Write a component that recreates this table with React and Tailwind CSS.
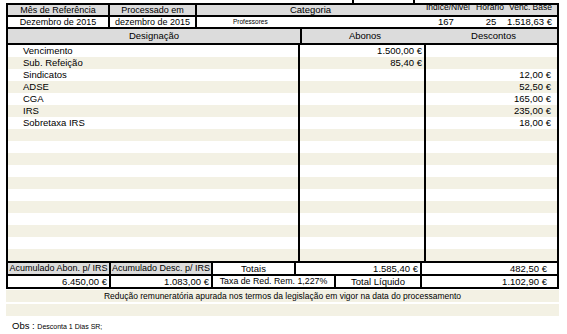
const body = [
  ['Vencimento', '1.500,00 €', ''],
  ['Sub. Refeição', '85,40 €', ''],
  ['Sindicatos', '', '12,00 €'],
  ['ADSE', '', '52,50 €'],
  ['CGA', '', '165,00 €'],
  ['IRS', '', '235,00 €'],
  ['Sobretaxa IRS', '', '18,00 €'],
];

while (body.length < 18) body.push(['', '', '']);

const App = () => {
  return (
    <div className="w-[567px] h-[334px] bg-white text-black font-['Liberation_Sans',Arial,sans-serif] text-[9.5px]">
      <div className="ml-[6px] w-[553px]">
        {/* tail of the table above */}
        <div className="flex h-[3px]">
          <div className="w-[346px]" />
          <div className="w-[2px] bg-black" />
          <div className="w-[59px]" />
          <div className="w-[2px] bg-black" />
        </div>

        {/* Header */}
        <div className="border-2 border-black">
          <div className="flex h-[12px] leading-[10px] bg-[#dcdcdc] border-b-2 border-black text-[9px]">
            <div className="w-[102px] text-center border-r-2 border-black">Mês de Referência</div>
            <div className="w-[87px] text-center border-r-2 border-black">Processado em</div>
            <div className="w-[227px] text-center text-[9.5px]">Categoria</div>
            <div className="w-[129px] flex text-[8.5px] leading-[8px] -mt-[2px]">
              <div className="w-[50px] pl-[2px]">Indice/Nivel</div>
              <div className="w-[32px] text-center">Horario</div>
              <div className="w-[47px] text-right pr-[1px]">Venc. Base</div>
            </div>
          </div>
          <div className="flex h-[12px] leading-[10px] bg-white border-b-2 border-black text-[9px]">
            <div className="w-[102px] text-center border-r-2 border-black">Dezembro de 2015</div>
            <div className="w-[87px] text-center border-r-2 border-black">dezembro de 2015</div>
            <div className="w-[227px] pl-[36px] text-[6.5px] leading-[10px]">Professores</div>
            <div className="w-[129px] flex text-[9.5px]">
              <div className="w-[50px] pl-[14px]">167</div>
              <div className="w-[32px] text-center pl-[2px]">25</div>
              <div className="w-[47px] text-right pr-[1px] whitespace-nowrap">1.518,63 €</div>
            </div>
          </div>
          <div className="flex h-[14px] leading-[14px] bg-[#dcdcdc]">
            <div className="w-[292px] text-center">Designação</div>
            <div className="w-[2px] bg-black" />
            <div className="w-[126px] text-center">Abonos</div>
            <div className="w-[2px]" />
            <div className="w-[127px] text-center">Descontos</div>
          </div>
        </div>

        {/* Body */}
        <div className="border-x-2 border-b-2 border-black">
          {body.map((r, i) => (
            <div key={i} className={`flex h-[12px] leading-[12px] ${i % 2 ? 'bg-[#f3f1e4]' : 'bg-white'}`}>
              <div className="w-[292px] pl-[15px] border-r-2 border-black">{r[0]}</div>
              <div className="w-[126px] text-right pr-[2px] border-r-2 border-black">{r[1]}</div>
              <div className="w-[127px] text-right pr-[2px]">{r[2]}</div>
            </div>
          ))}
        </div>

        {/* Totals */}
        <div className="border-x-2 border-b-2 border-black">
          <div className="flex h-[13px] leading-[11px] border-b-2 border-black">
            <div className="w-[103px] bg-[#dcdcdc] text-center text-[9px] whitespace-nowrap border-r-2 border-black">Acumulado Abon. p/ IRS</div>
            <div className="w-[102px] bg-[#dcdcdc] text-center text-[9px] whitespace-nowrap border-r-2 border-black">Acumulado Desc. p/ IRS</div>
            <div className="w-[83px] text-center border-r-2 border-black">Totais</div>
            <div className="w-[126px] text-right pr-[2px] border-r-2 border-black">1.585,40 €</div>
            <div className="w-[127px] text-right pr-[2px]">482,50 €</div>
          </div>
          <div className="flex h-[11px] leading-[11px]">
            <div className="w-[103px] text-right pr-[2px] border-r-2 border-black">6.450,00 €</div>
            <div className="w-[102px] text-right pr-[2px] border-r-2 border-black">1.083,00 €</div>
            <div className="w-[123px] text-center text-[8.8px] whitespace-nowrap border-r-2 border-black">Taxa de Red. Rem. 1,227%</div>
            <div className="w-[86px] text-center border-r-2 border-black">Total Líquido</div>
            <div className="w-[127px] text-right pr-[2px]">1.102,90 €</div>
          </div>
        </div>

        <div className="mt-[1px] h-[12px] leading-[12px] bg-[#f3f1e4] text-center text-[8.5px] whitespace-nowrap">
          Redução remuneratória apurada nos termos da legislação em vigor na data do processamento
        </div>
        <div className="mt-[2px] h-[12px] bg-[#f3f1e4]" />
      </div>

      <div className="mt-[5px] pl-[12px] leading-[10px]">
        Obs : <span className="text-[7px]">Desconta 1 Dias SR;</span>
      </div>
    </div>
  );
};

export default App;
